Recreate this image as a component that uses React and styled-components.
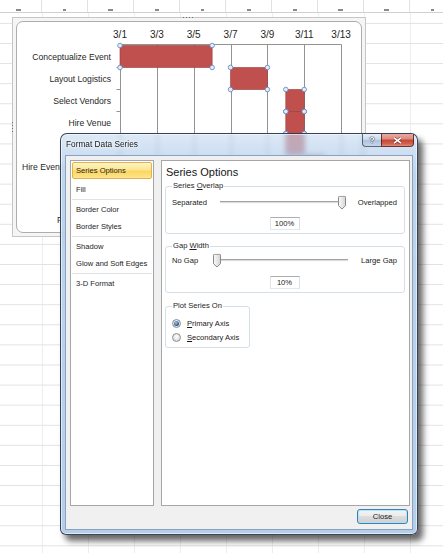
import styled, { createGlobalStyle } from "styled-components";

const GlobalStyle = createGlobalStyle`
  html, body {
    margin: 0;
    padding: 0;
    background: #fff;
  }
  body {
    font-family: "Liberation Sans", Arial, sans-serif;
  }
  * {
    box-sizing: border-box;
  }
`;

// chart geometry, in page pixels
const X0 = 120;
const STEP = 36.85;
const Y0 = 45.5;
const BAND = 22;
const dayX = (d) => X0 + ((d - 1) / 2) * STEP;
const ticks = [1, 3, 5, 7, 9, 11, 13];

// rows hidden by the dialog keep their bars but no label;
// the one cut by the dialog edge only shows its left part
const tasks = [
  { name: "Conceptualize Event", start: 1, end: 6 },
  { name: "Layout Logistics", start: 7, end: 9 },
  { name: "Select Vendors", start: 10, end: 11 },
  { name: "Hire Venue", start: 10, end: 11 },
  { name: "Hire Caterer", start: 10, end: 11, hidden: true },
  { name: "Hire Event", start: 11, end: 12, labelAt: 22 },
  { name: "Send Invites", start: 11, end: 13, hidden: true },
  { name: "F", start: 12, end: 13, labelAt: 57, dy: 9 },
];

const headerMarks = [5, 3, 5, 4, 3, 4, 4, 5, 5, 3];

const Sheet = styled.div`
  position: relative;
  width: 443px;
  height: 553px;
  overflow: hidden;
  background-color: #fff;
  background-image: linear-gradient(to bottom, #e2e2e2 1px, transparent 1px),
    linear-gradient(to right, #ededed 1px, transparent 1px);
  background-size: 100% 20.1px, 46px 100%;
  background-position: 0 2.8px, 42px 0;
`;

const HeaderStrip = styled.div`
  display: flex;
  height: 13px;
  margin-left: -4px;
  background: #fff;
  border-bottom: 1px solid #d0d0d0;
`;

const HeaderCell = styled.div`
  flex: 0 0 46px;
  display: flex;
  justify-content: center;
  align-items: flex-end;
  padding-bottom: 1px;
  border-right: 1px solid #e2e2e2;
`;

const Mark = styled.span`
  width: ${(p) => p.$w}px;
  height: 2px;
  background: #8a8a8a;
`;

const ChartFrame = styled.div`
  position: relative;
  width: 354px;
  height: 220px;
  margin: 4px 0 0 12px;
  padding: 3px;
  border: 1px solid #c6c6c6;
  background: #f5f5f5;

  &::before {
    content: "";
    position: absolute;
    top: -1px;
    left: 170px;
    width: 10px;
    height: 1px;
    background: repeating-linear-gradient(to right, #6f6f6f 0 1px, transparent 1px 3px);
  }
  &::after {
    content: "";
    position: absolute;
    left: -1px;
    top: 104px;
    width: 1px;
    height: 10px;
    background: repeating-linear-gradient(to bottom, #6f6f6f 0 1px, transparent 1px 3px);
  }
`;

const ChartArea = styled.div`
  height: 100%;
  border: 1px solid #adadad;
  border-radius: 7px;
  background: #fff;
  overflow: hidden;
`;

const ChartSvg = styled.svg`
  display: block;
`;

const AxisText = styled.text`
  font-family: "Liberation Sans", Arial, sans-serif;
  font-size: 10px;
  fill: #1f1f1f;
`;

const CategoryText = styled.text`
  font-family: "Liberation Sans", Arial, sans-serif;
  font-size: 8.6px;
  fill: #1f1f1f;
`;

function GanttChart() {
  const crisp = (v) => Math.round(v) + 0.5;
  return (
    <ChartSvg viewBox="17 22 344 210" width="344" height="210">
      {ticks.map((d) => (
        <line
          key={"g" + d}
          x1={crisp(dayX(d))}
          x2={crisp(dayX(d))}
          y1={44.5}
          y2={Y0 + tasks.length * BAND}
          stroke="#939393"
          strokeWidth="1"
        />
      ))}
      <line x1={120} x2={crisp(dayX(13))} y1={44.5} y2={44.5} stroke="#939393" />
      {tasks.map((t, i) =>
        i === 0 ? null : (
          <line
            key={"t" + i}
            x1={116.5}
            x2={120.5}
            y1={Y0 + i * BAND}
            y2={Y0 + i * BAND}
            stroke="#939393"
          />
        )
      )}
      {ticks.map((d) => (
        <AxisText key={"a" + d} x={dayX(d)} y={37.5} textAnchor="middle">
          3/{d}
        </AxisText>
      ))}
      {tasks.map((t, i) =>
        t.hidden ? null : (
          <CategoryText
            key={t.name}
            x={t.labelAt || 111}
            y={Y0 + i * BAND + BAND / 2 + 3 + (t.dy || 0)}
            textAnchor={t.labelAt ? "start" : "end"}
          >
            {t.name}
          </CategoryText>
        )
      )}
      {tasks.map((t, i) => (
        <rect
          key={"b" + i}
          x={dayX(t.start)}
          y={Y0 + i * BAND}
          width={dayX(t.end) - dayX(t.start)}
          height={BAND}
          fill="#c0504d"
          stroke="#943c3a"
          strokeWidth="0.6"
        />
      ))}
      {tasks.map((t, i) =>
        [
          [dayX(t.start), Y0 + i * BAND],
          [dayX(t.end), Y0 + i * BAND],
          [dayX(t.start), Y0 + (i + 1) * BAND],
          [dayX(t.end), Y0 + (i + 1) * BAND],
        ].map(([cx, cy], k) => (
          <circle
            key={"h" + i + k}
            cx={cx}
            cy={cy}
            r="2.3"
            fill="#e3ebf6"
            stroke="#5d84ba"
            strokeWidth="0.8"
          />
        ))
      )}
    </ChartSvg>
  );
}

const Dialog = styled.div`
  position: absolute;
  left: 60px;
  top: 133px;
  width: 358px;
  height: 402px;
  display: flex;
  flex-direction: column;
  padding: 0 4px 4px;
  border: 1px solid rgba(32, 42, 60, 0.85);
  border-radius: 7px 7px 6px 6px;
  background: linear-gradient(
    to bottom,
    rgba(200, 220, 242, 0.62),
    rgba(172, 201, 233, 0.78) 40px,
    rgba(168, 198, 231, 0.86)
  );
  backdrop-filter: blur(2.5px);
  box-shadow: 5px 6px 6px rgba(0, 0, 0, 0.6), inset 0 0 0 1px rgba(255, 255, 255, 0.55);
  color: #1a1a1a;
`;

const TitleBar = styled.div`
  display: flex;
  align-items: flex-start;
  justify-content: space-between;
  height: 21px;
  margin: 0 -4px;
  padding: 0 3px 0 5px;
`;

const Title = styled.div`
  font-size: 8.3px;
  line-height: 21px;
  color: #151515;
  text-shadow: 0 0 4px rgba(255, 255, 255, 0.95), 0 0 2px rgba(255, 255, 255, 0.9);
`;

const CaptionButtons = styled.div`
  display: flex;
`;

const HelpButton = styled.div`
  width: 19px;
  height: 13px;
  display: flex;
  align-items: center;
  justify-content: center;
  border: 1px solid rgba(48, 60, 82, 0.75);
  border-top: none;
  border-right: none;
  border-radius: 0 0 0 4px;
  background: linear-gradient(#e6eef8, #cbd9ea 45%, #aec2dc 52%, #c6d7ec);
  font-size: 9px;
  font-weight: bold;
  color: #fff;
  text-shadow: 0 0 1px #2b3a52, 0 0 1px #2b3a52, 0 0 1px #2b3a52;
`;

const CloseCaption = styled.div`
  width: 33px;
  height: 13px;
  display: flex;
  align-items: center;
  justify-content: center;
  border: 1px solid rgba(72, 28, 28, 0.8);
  border-top: none;
  border-radius: 0 0 4px 0;
  background: linear-gradient(#eaaa9f, #dc8a7d 40%, #c8473b 52%, #d15e4e 80%, #e08c7a);
`;

const Client = styled.div`
  flex: 1;
  display: flex;
  flex-direction: column;
  padding: 4px 2px 5px 4px;
  border: 1px solid #8aa2bf;
  background: #f0f0f0;
`;

const Body = styled.div`
  display: grid;
  grid-template-columns: 84px 1fr;
  column-gap: 7px;
  height: 346px;
`;

const Nav = styled.div`
  display: flex;
  flex-direction: column;
  border: 1px solid #a6a6a6;
  background: #fff;
`;

const NavItem = styled.div`
  height: 17px;
  padding-left: 5px;
  font-size: 7.6px;
  line-height: 17px;
  white-space: nowrap;
  color: #1e1e1e;

  ${(p) =>
    p.$selected &&
    `
    margin: 1px 1px 2px;
    padding-left: 3px;
    line-height: 15px;
    border: 1px solid #e3b24a;
    border-radius: 2px;
    background: linear-gradient(#fff4c8, #fde68f 45%, #fcd65f 55%, #fde48e);
  `}
`;

const NavRule = styled.div`
  height: 1px;
  margin: 1px;
  background: #e2e2e2;
`;

const Panel = styled.div`
  padding: 4px 4px 0 3px;
  border: 1px solid #a6a6a6;
  background: #fff;
`;

const PanelHeading = styled.div`
  margin-left: 1px;
  font-size: 11px;
  line-height: 14px;
  color: #161616;
`;

const Group = styled.fieldset`
  width: ${(p) => (p.$width ? `${p.$width}px` : "auto")};
  min-width: 0;
  margin: ${(p) => p.$gap}px 0 0;
  padding: ${(p) => p.$padTop}px 7px ${(p) => p.$padBottom}px 6px;
  border: 1px solid #d5dfe5;
  border-radius: 3px;
  font-size: 7.6px;
`;

const Legend = styled.legend`
  padding: 0 1px;
  font-size: 7.6px;
  line-height: 10px;
  color: #1e1e1e;
`;

const SliderRow = styled.div`
  display: flex;
  align-items: center;
  height: 12px;
  white-space: nowrap;
`;

const Track = styled.div`
  position: relative;
  flex: 1;
  height: 3px;
  margin: 0 ${(p) => p.$mr}px 0 ${(p) => p.$ml}px;
  border-top: 1px solid #a3a3a3;
  border-bottom: 1px solid #fbfbfb;
  background: #dcdcdc;
`;

const Thumb = styled.svg`
  position: absolute;
  top: 50%;
  left: ${(p) => p.$pos}%;
  transform: translate(-50%, -45%);
`;

const ValueBox = styled.div`
  width: 30px;
  height: 13px;
  margin: ${(p) => p.$top}px auto 0;
  border: 1px solid;
  border-color: #abadb3 #dbdfe6 #e3e9ef #e2e3ea;
  background: #fff;
  font-size: 7.6px;
  line-height: 11px;
  text-align: center;
`;

const RadioRow = styled.div`
  display: flex;
  align-items: center;
  gap: 6px;
  height: 12px;
  margin-top: ${(p) => p.$top || 0}px;
  white-space: nowrap;
`;

const Radio = styled.span`
  position: relative;
  flex: 0 0 9px;
  width: 9px;
  height: 9px;
  border: 1px solid #8d8d8d;
  border-radius: 50%;
  background: radial-gradient(circle at 50% 40%, #fdfdfd, #d2d2d2);

  ${(p) =>
    p.$checked &&
    `
    &::after {
      content: "";
      position: absolute;
      left: 1px;
      top: 1px;
      width: 5px;
      height: 5px;
      border-radius: 50%;
      background: radial-gradient(circle at 40% 35%, #9ccbf2, #23508f 70%);
    }
  `}
`;

const Footer = styled.div`
  display: flex;
  justify-content: flex-end;
  margin-top: 3px;
  padding-right: 2px;
`;

const DialogButton = styled.button`
  width: 51px;
  height: 15px;
  padding: 0;
  border: 1px solid #3c7fb1;
  border-radius: 3px;
  background: linear-gradient(#f3f3f3, #ebebeb 49%, #dddddd 50%, #cfcfcf);
  box-shadow: inset 0 0 0 1px rgba(168, 228, 255, 0.85);
  font-family: "Liberation Sans", Arial, sans-serif;
  font-size: 7.6px;
  color: #1a1a1a;
`;

function SliderThumb({ pos }) {
  return (
    <Thumb $pos={pos} width="8" height="14" viewBox="0 0 8 14">
      <defs>
        <linearGradient id={"tg" + pos} x1="0" y1="0" x2="1" y2="0">
          <stop offset="0" stopColor="#fbfbfb" />
          <stop offset="1" stopColor="#d4d4d4" />
        </linearGradient>
      </defs>
      <path
        d="M1.5 0.5 H6.5 A1 1 0 0 1 7.5 1.5 V10 L4 13.3 L0.5 10 V1.5 A1 1 0 0 1 1.5 0.5 Z"
        fill={`url(#tg${pos})`}
        stroke="#8a8a8a"
        strokeWidth="1"
      />
    </Thumb>
  );
}

export default function App() {
  return (
    <>
      <GlobalStyle />
      <Sheet>
        <HeaderStrip>
          {headerMarks.map((w, i) => (
            <HeaderCell key={i}>
              <Mark $w={w} />
            </HeaderCell>
          ))}
        </HeaderStrip>

        <ChartFrame>
          <ChartArea>
            <GanttChart />
          </ChartArea>
        </ChartFrame>

        <Dialog>
          <TitleBar>
            <Title>Format Data Series</Title>
            <CaptionButtons>
              <HelpButton>?</HelpButton>
              <CloseCaption>
                <svg width="9" height="7" viewBox="0 0 9 7">
                  <path d="M1 0.8 L8 6.2 M8 0.8 L1 6.2" stroke="rgba(70,20,20,0.55)" strokeWidth="2.8" />
                  <path d="M1 0.8 L8 6.2 M8 0.8 L1 6.2" stroke="#fff" strokeWidth="1.6" />
                </svg>
              </CloseCaption>
            </CaptionButtons>
          </TitleBar>

          <Client>
            <Body>
              <Nav>
                <NavItem $selected>Series Options</NavItem>
                <NavItem>Fill</NavItem>
                <NavRule />
                <NavItem>Border Color</NavItem>
                <NavItem>Border Styles</NavItem>
                <NavRule />
                <NavItem>Shadow</NavItem>
                <NavItem>Glow and Soft Edges</NavItem>
                <NavRule />
                <NavItem>3-D Format</NavItem>
              </Nav>

              <Panel>
                <PanelHeading>Series Options</PanelHeading>

                <Group $gap={2} $padTop={5} $padBottom={3}>
                  <Legend>
                    Series <u>O</u>verlap
                  </Legend>
                  <SliderRow>
                    <span>Separated</span>
                    <Track $ml={13} $mr={16}>
                      <SliderThumb pos={100} />
                    </Track>
                    <span>Overlapped</span>
                  </SliderRow>
                  <ValueBox $top={9}>100%</ValueBox>
                </Group>

                <Group $gap={7} $padTop={3} $padBottom={3}>
                  <Legend>
                    Gap <u>W</u>idth
                  </Legend>
                  <SliderRow>
                    <span>No Gap</span>
                    <Track $ml={15} $mr={13}>
                      <SliderThumb pos={3} />
                    </Track>
                    <span>Large Gap</span>
                  </SliderRow>
                  <ValueBox $top={10}>10%</ValueBox>
                </Group>

                <Group $gap={8} $padTop={6} $padBottom={4} $width={85}>
                  <Legend>Plot Series On</Legend>
                  <RadioRow>
                    <Radio $checked />
                    <span>
                      <u>P</u>rimary Axis
                    </span>
                  </RadioRow>
                  <RadioRow $top={2}>
                    <Radio />
                    <span>
                      <u>S</u>econdary Axis
                    </span>
                  </RadioRow>
                </Group>
              </Panel>
            </Body>
            <Footer>
              <DialogButton>Close</DialogButton>
            </Footer>
          </Client>
        </Dialog>
      </Sheet>
    </>
  );
}
